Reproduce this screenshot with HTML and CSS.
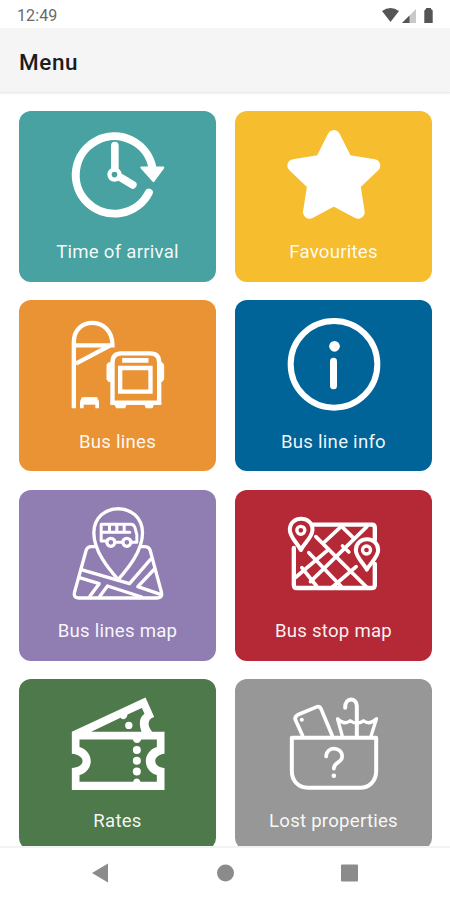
FILE: index.html
```html
<!DOCTYPE html>
<html lang="en">
<head>
<meta charset="utf-8">
<title>Menu</title>
<link rel="stylesheet" href="styles.css">
</head>
<body>
<div class="screen">
  <div class="status">
    <span class="time">12:49</span>
    <svg class="signals" viewBox="0 0 54 18">
      <path d="M1 5Q9.500-1 18 5L9.500 16Z" fill="#555"/>
      <path d="M21 17L35 3V17Z" fill="#c9c9c9"/>
      <path d="M21 17L28.500 9.500V17Z" fill="#555"/>
      <path d="M43.300 17V4.500L45 3V2H50V3L51.700 4.500V17Z" fill="#555"/>
    </svg>
  </div>
  <header class="bar"><h1>Menu</h1></header>
  <main class="grid">
    <a class="card teal">
      <svg class="icon" viewBox="157.500 60.300 300 300">
        <path d="M400 263A116 116 0 1 1 411 190" stroke-width="24"/>
        <path class="solid" d="M378 188H443L414 228Z" stroke-width="7"/>
        <path d="M298 122V190M317 219L352 240" stroke-width="23"/>
        <circle cx="297" cy="209" r="15" stroke-width="13"/>
      </svg>
      <span>Time of arrival</span>
    </a>
    <a class="card yellow">
      <svg class="icon" viewBox="160.500 60.300 300 300">
        <path class="solid" d="M310 95L347 169L430 182L370 239L383 322L310 283L237 322L250 239L190 182L273 169Z" stroke-width="39"/>
      </svg>
      <span>Favourites</span>
    </a>
    <a class="card orange">
      <svg class="icon" viewBox="157.500 59 300 300">
        <g class="sharp">
          <path d="M175 339V140C175 62 291 62 291 150H175M181 205L289 148" stroke-width="13"/>
          <path d="M199 339V322Q199 311 211 311H233Q245 311 245 322V339" stroke-width="11"/>
          <path class="fill" d="M198 306H246V328H198Z"/>
          <path d="M291 322V201Q291 174 318 174H404Q431 174 431 201V322Z" stroke-width="13"/>
          <path d="M314 218H405V289H314Z" stroke-width="13"/>
          <path class="fill" d="M320 188H399V202H320ZM285 318H437V328H415L411 339H391L387 328H333L329 339H302L297 328H285Z"/>
          <path class="fill" d="M288 201H279L273 208V252L279 260H288ZM433 201H440L446 208V252L440 260H433Z"/>
        </g>
      </svg>
      <span>Bus lines</span>
    </a>
    <a class="card blue">
      <svg class="icon" viewBox="160.500 59 300 300">
        <circle cx="310.500" cy="207" r="130" stroke-width="18"/>
        <circle class="fill" cx="312" cy="153" r="16"/>
        <path d="M309 198V271" stroke-width="21"/>
      </svg>
      <span>Bus line info</span>
    </a>
    <a class="card purple">
      <svg class="icon" viewBox="157.500 58 300 300">
        <g stroke-width="10">
          <path d="M308 285C280 253 235 200 235 145C235 48 381 48 381 145C381 200 336 253 308 285Z"/>
          <path d="M237 186H225Q215 187 212 197L177 323Q173 340 189 340H425Q442 340 438 323L404 197Q401 187 390 186H380"/>
          <path d="M197 255L342 297L405 224M192 279L251 297L223 335M252 336L276 304L379 337M417 253L367 306L435 329"/>
          <path d="M270 169H257V119H345Q356 119 359 131L364 150V173H350M304 173H318M258 143H343M282 120V142M304 120V142M326 120V142" stroke-width="9"/>
          <circle cx="286" cy="173" r="12"/><circle cx="334" cy="173" r="12"/>
        </g>
      </svg>
      <span>Bus lines map</span>
    </a>
    <a class="card red">
      <svg class="icon" viewBox="160.500 58 300 300">
        <path d="M246 120H424Q433 120 433 129V166M433 238V300Q433 310 423 310H199Q190 310 190 300V190" stroke-width="13"/>
        <path d="M256 156L408 307M235 204L333 306M214 249L258 304M331 123L368 159M336 184L355 202" stroke-width="11"/>
        <path d="M329 128L282 172M409 126L240 291M290 198L193 280M377 246L306 307" stroke-width="11"/>
        <path class="pin-red" d="M211 196C200 174 178 157 178 135C178 91 246 91 246 135C246 157 222 174 211 196Z" stroke-width="12"/>
        <circle cx="211" cy="137" r="12" stroke-width="10"/>
        <path class="pin-red" d="M409 255C398 234 376 217 376 196C376 153 443 153 443 196C443 217 420 234 409 255Z" stroke-width="12"/>
        <circle cx="408" cy="196" r="12" stroke-width="10"/>
      </svg>
      <span>Bus stop map</span>
    </a>
    <a class="card green">
      <svg class="icon" viewBox="157.500 56.700 300 300">
        <path class="fill" fill-rule="evenodd" d="M169 170L390 67L416 126C397 132 393 150 410 170H447V236C410 240 410 276 447 279V345H169V279C212 276 212 240 169 236ZM227 170H378C368 142 374 125 387 116L379 99L336 118C335 132 321 136 315 128ZM192 193V216C237 230 237 287 192 300V320H353C356 307 371 307 375 320H424V300C380 287 380 230 424 216V193H377C373 207 356 207 352 193Z"/>
        <circle class="fill" cx="340" cy="151" r="11"/>
        <circle class="fill" cx="364" cy="225" r="12"/>
        <circle class="fill" cx="364" cy="257" r="12"/>
        <circle class="fill" cx="364" cy="289" r="12"/>
      </svg>
      <span>Rates</span>
    </a>
    <a class="card gray">
      <svg class="icon" viewBox="160.500 56.700 300 300">
        <path d="M184 188H437V288C437 320 414 338 389 338H233C204 338 184 318 184 288Z" stroke-width="12"/>
        <path d="M216 181L195 135Q191 125 202 119L257 96Q267 92 272 102L305 181" stroke-width="11"/>
        <circle class="fill" cx="214" cy="134" r="6"/>
        <path d="M344 98C344 64 379 68 379 92V181" stroke-width="12"/>
        <path d="M335 181L321 131Q341 151 359 137Q378 151 399 137Q417 151 438 131L422 181" stroke-width="10"/>
        <path d="M287 244C287 212 335 214 335 244C335 264 309 260 310 281" stroke-width="11"/>
        <circle class="fill" cx="310" cy="302" r="7"/>
      </svg>
      <span>Lost properties</span>
    </a>
  </main>
  <nav class="nav">
    <svg viewBox="0 0 270 20">
      <path d="M2 10L18 .500V19.500Z"/>
      <circle cx="135.500" cy="10" r="8.500"/>
      <rect x="251" y="1.500" width="17" height="17" rx="1"/>
    </svg>
  </nav>
</div>
</body>
</html>
```
FILE: styles.css
```css
* { box-sizing: border-box; }
body { margin: 0; background: #fff; font-family: Roboto, "Liberation Sans", sans-serif; }
.screen { display: flex; flex-direction: column; width: 450px; height: 900px; overflow: hidden; }
.status { flex: none; height: 28px; display: flex; justify-content: space-between; align-items: center; padding: 2px 15px 0 17px; }
.time { font-size: 16px; color: #6a6a6a; letter-spacing: .1px; }
.signals { width: 54px; height: 18px; }
.bar { flex: none; height: 65px; background: #f5f5f5; border-bottom: 1px solid #e9e9e9; box-shadow: 0 1px 2px #0000000f; display: flex; align-items: center; padding: 3px 19px 0; }
h1 { margin: 0; font-size: 22.5px; font-weight: 500; letter-spacing: .6px; color: #1c1c1c; }
.grid { flex: 1; min-height: 0; overflow: hidden; display: grid; grid-template-columns: 197px 197px; grid-auto-rows: 171px; gap: 18.6px 19px; padding: 17.6px 19px 0; }
.card { border-radius: 12px; display: flex; flex-direction: column; align-items: center; padding-top: 14.5px; color: #fffffff0; font-size: 18.6px; line-height: 22px; letter-spacing: .25px; }
.card span { margin-top: 16px; }
.teal { background: #48a2a2; }
.yellow { background: #f6bd2e; }
.orange { background: #ea9334; }
.blue { background: #006499; }
.purple { background: #907eb3; }
.red { background: #b52936; }
.green { background: #4d794b; }
.gray { background: #979797; }
.icon { flex: none; width: 100px; height: 100px; fill: none; stroke: #fff; stroke-linecap: round; stroke-linejoin: round; }
.sharp { stroke-linecap: butt; stroke-linejoin: miter; }
.solid { fill: #fff; }
.fill { fill: #fff; stroke: none; }
.pin-red { fill: #b52936; }
.nav { flex: none; height: 54px; border-top: 2px solid #f3f3f3; display: flex; justify-content: center; padding-top: 15px; }
.nav svg { width: 270px; height: 20px; fill: #8b8b8b; }
```
